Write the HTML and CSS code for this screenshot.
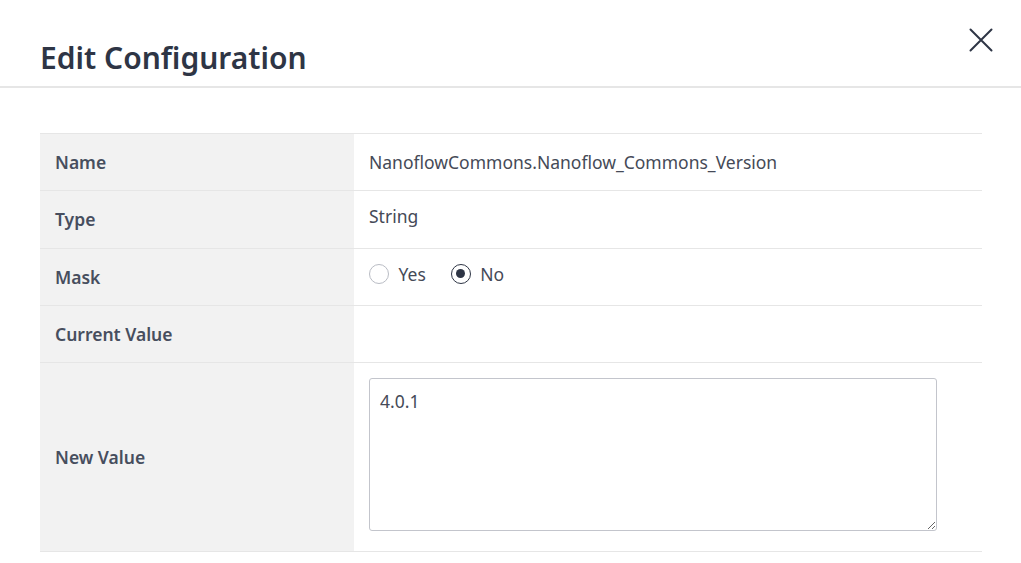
FILE: index.html
```html
<!DOCTYPE html>
<html>
<head>
<meta charset="utf-8">
<link rel="stylesheet" href="styles.css">
</head>
<body>
<div class="dialog">
  <header class="header">
    <h1 class="title">Edit Configuration</h1>
    <button class="close" aria-label="Close">
      <svg width="24" height="24" viewBox="0 0 24 24"><path d="M1.5 1.5 L22.5 22.5 M22.5 1.5 L1.5 22.5" stroke="#2e3545" stroke-width="2" stroke-linecap="round" fill="none"/></svg>
    </button>
  </header>
  <div class="content">
    <table class="config">
      <tr class="row">
        <th class="label">Name</th>
        <td class="value">NanoflowCommons.Nanoflow_Commons_Version</td>
      </tr>
      <tr class="row">
        <th class="label">Type</th>
        <td class="value raised">String</td>
      </tr>
      <tr class="row">
        <th class="label">Mask</th>
        <td class="value raised">
          <div class="radios">
            <label class="radio"><span class="dot"></span>Yes</label>
            <label class="radio"><span class="dot checked"></span>No</label>
          </div>
        </td>
      </tr>
      <tr class="row">
        <th class="label">Current Value</th>
        <td class="value"></td>
      </tr>
      <tr class="row tall">
        <th class="label">New Value</th>
        <td class="value top"><textarea class="input">4.0.1</textarea></td>
      </tr>
    </table>
  </div>
</div>
</body>
</html>
```
FILE: styles.css
```css
html, body {
  margin: 0;
  padding: 0;
  background: #ffffff;
  font-family: "Noto Sans", "Open Sans", sans-serif;
}
.dialog {
  width: 1021px;
}
.header {
  border-bottom: 2px solid #e6e6e6;
  display: flex;
  justify-content: space-between;
  box-sizing: border-box;
  height: 88px;
  padding: 0 28px 0 40px;
}
.title {
  margin: 0;
  padding-top: 37px;
  font-size: 30px;
  line-height: 42px;
  font-weight: 600;
  color: #2e3545;
}
.close {
  border: 0;
  background: none;
  padding: 0;
  margin-top: 28px;
  width: 24px;
  height: 24px;
  cursor: pointer;
}
.close svg { display: block; }
.content {
  padding: 45px 39px 20px 40px;
}
.config {
  width: 942px;
  border-collapse: collapse;
  border-top: 1px solid #e6e6e6;
}
.row {
  border-bottom: 1px solid #e6e6e6;
}
.row td, .row th {
  height: 57.3px;
  padding: 0 15px;
  box-sizing: border-box;
}
.label {
  width: 314px;
  box-sizing: border-box;
  background: #f2f2f2;
  text-align: left;
  font-weight: 600;
  font-size: 17.5px;
  color: #474e5e;
}
.value {
  font-size: 17.5px;
  color: #454a57;
  vertical-align: middle;
}
.row .value.raised {
  padding-bottom: 6px;
}
.row .value.top {
  vertical-align: top;
  padding-top: 15px;
}
.radios {
  display: flex;
  gap: 25px;
  align-items: center;
}
.radio {
  display: flex;
  align-items: center;
  gap: 9.5px;
}
.dot {
  width: 20px;
  height: 20px;
  border: 1px solid #b9bcc4;
  border-radius: 50%;
  box-sizing: border-box;
  display: inline-block;
  position: relative;
}
.dot.checked {
  border: 1.5px solid #2e3545;
}
.dot.checked::after {
  content: "";
  position: absolute;
  left: 50%;
  top: 50%;
  width: 9px;
  height: 9px;
  margin: -4.5px 0 0 -4.5px;
  border-radius: 50%;
  background: #2e3545;
}
.row.tall td, .row.tall th {
  height: 189px;
}
.input {
  display: block;
  width: 568px;
  height: 153px;
  margin: 0;
  box-sizing: border-box;
  border: 1px solid #c3c5cc;
  border-radius: 3px;
  padding: 10px;
  font-family: "Noto Sans", "Open Sans", sans-serif;
  font-size: 17.5px;
  color: #454a57;
  resize: both;
}
```
